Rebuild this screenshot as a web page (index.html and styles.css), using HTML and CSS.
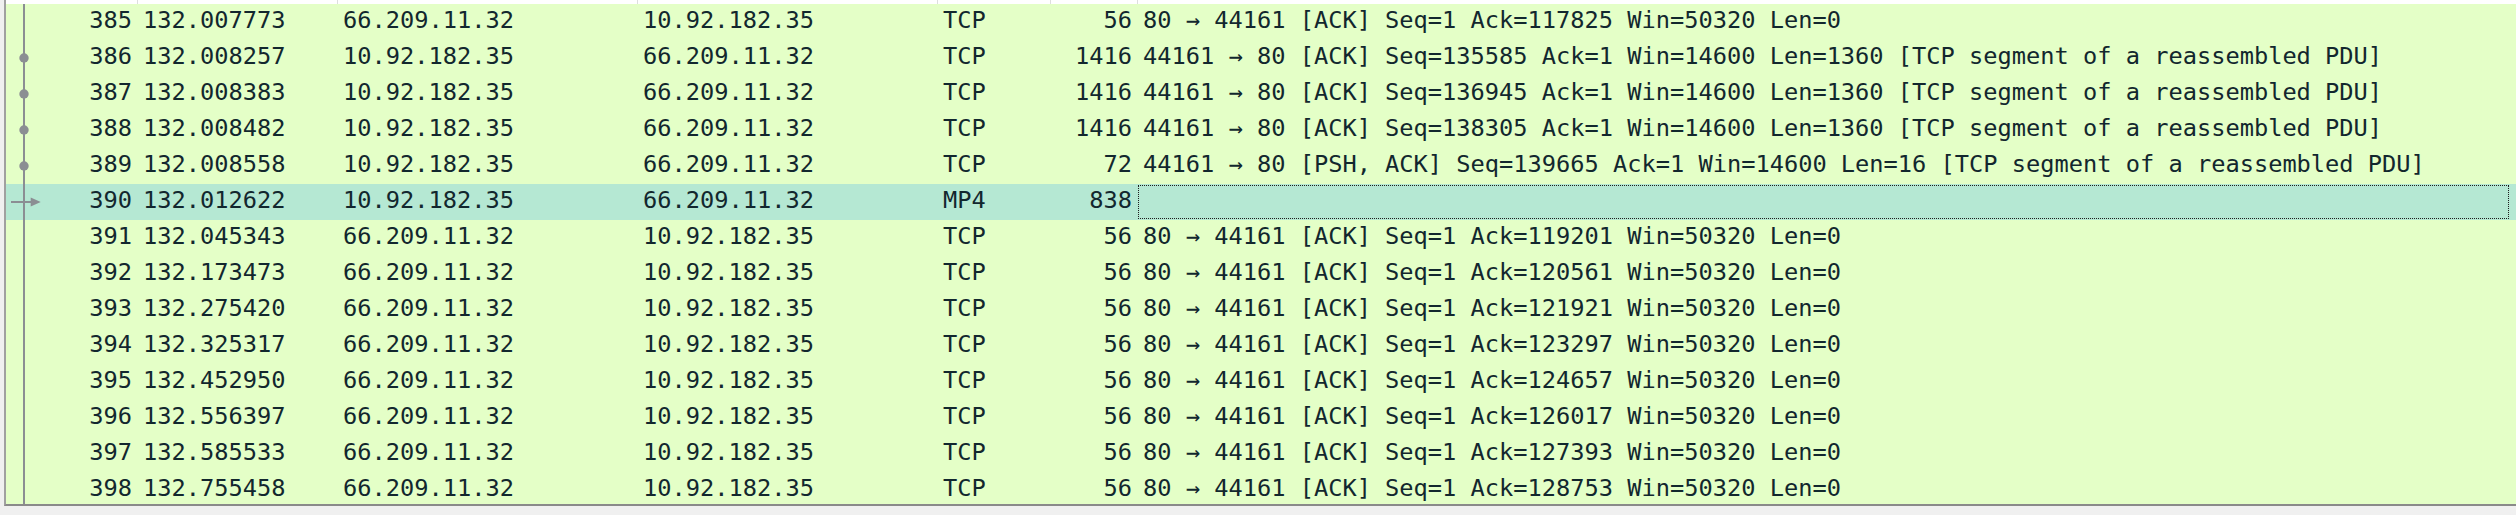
FILE: index.html
```html
<!DOCTYPE html>
<html>
<head>
<meta charset="utf-8">
<link rel="stylesheet" href="styles.css">
</head>
<body>
<div class="pane">
  <div class="head">
    <span></span><span></span><span></span><span></span><span></span><span></span><span class="last"></span>
  </div>
  <div class="row">
    <svg class="ind" width="36" height="36" viewBox="0 0 36 36"><rect x="17" y="0" width="2" height="36"/></svg>
    <span class="c r">385</span><span class="c">132.007773</span><span class="c">66.209.11.32</span><span class="c">10.92.182.35</span><span class="c">TCP</span><span class="c r">56</span><span class="c">80 → 44161 [ACK] Seq=1 Ack=117825 Win=50320 Len=0</span>
  </div>
  <div class="row">
    <svg class="ind" width="36" height="36" viewBox="0 0 36 36"><rect x="17" y="0" width="2" height="36"/><circle cx="18" cy="18" r="4.7"/></svg>
    <span class="c r">386</span><span class="c">132.008257</span><span class="c">10.92.182.35</span><span class="c">66.209.11.32</span><span class="c">TCP</span><span class="c r">1416</span><span class="c">44161 → 80 [ACK] Seq=135585 Ack=1 Win=14600 Len=1360 [TCP segment of a reassembled PDU]</span>
  </div>
  <div class="row">
    <svg class="ind" width="36" height="36" viewBox="0 0 36 36"><rect x="17" y="0" width="2" height="36"/><circle cx="18" cy="18" r="4.7"/></svg>
    <span class="c r">387</span><span class="c">132.008383</span><span class="c">10.92.182.35</span><span class="c">66.209.11.32</span><span class="c">TCP</span><span class="c r">1416</span><span class="c">44161 → 80 [ACK] Seq=136945 Ack=1 Win=14600 Len=1360 [TCP segment of a reassembled PDU]</span>
  </div>
  <div class="row">
    <svg class="ind" width="36" height="36" viewBox="0 0 36 36"><rect x="17" y="0" width="2" height="36"/><circle cx="18" cy="18" r="4.7"/></svg>
    <span class="c r">388</span><span class="c">132.008482</span><span class="c">10.92.182.35</span><span class="c">66.209.11.32</span><span class="c">TCP</span><span class="c r">1416</span><span class="c">44161 → 80 [ACK] Seq=138305 Ack=1 Win=14600 Len=1360 [TCP segment of a reassembled PDU]</span>
  </div>
  <div class="row">
    <svg class="ind" width="36" height="36" viewBox="0 0 36 36"><rect x="17" y="0" width="2" height="36"/><circle cx="18" cy="18" r="4.7"/></svg>
    <span class="c r">389</span><span class="c">132.008558</span><span class="c">10.92.182.35</span><span class="c">66.209.11.32</span><span class="c">TCP</span><span class="c r">72</span><span class="c">44161 → 80 [PSH, ACK] Seq=139665 Ack=1 Win=14600 Len=16 [TCP segment of a reassembled PDU]</span>
  </div>
  <div class="row sel">
    <svg class="ind" width="36" height="36" viewBox="0 0 36 36"><rect x="17" y="0" width="2" height="36"/><rect x="5" y="17" width="22" height="2"/><polygon points="24.7,13.5 34.7,18 24.7,22.5"/></svg>
    <span class="c r">390</span><span class="c">132.012622</span><span class="c">10.92.182.35</span><span class="c">66.209.11.32</span><span class="c">MP4</span><span class="c r">838</span><span class="c info"></span>
  </div>
  <div class="row">
    <svg class="ind" width="36" height="36" viewBox="0 0 36 36"><rect x="17" y="0" width="2" height="36"/></svg>
    <span class="c r">391</span><span class="c">132.045343</span><span class="c">66.209.11.32</span><span class="c">10.92.182.35</span><span class="c">TCP</span><span class="c r">56</span><span class="c">80 → 44161 [ACK] Seq=1 Ack=119201 Win=50320 Len=0</span>
  </div>
  <div class="row">
    <svg class="ind" width="36" height="36" viewBox="0 0 36 36"><rect x="17" y="0" width="2" height="36"/></svg>
    <span class="c r">392</span><span class="c">132.173473</span><span class="c">66.209.11.32</span><span class="c">10.92.182.35</span><span class="c">TCP</span><span class="c r">56</span><span class="c">80 → 44161 [ACK] Seq=1 Ack=120561 Win=50320 Len=0</span>
  </div>
  <div class="row">
    <svg class="ind" width="36" height="36" viewBox="0 0 36 36"><rect x="17" y="0" width="2" height="36"/></svg>
    <span class="c r">393</span><span class="c">132.275420</span><span class="c">66.209.11.32</span><span class="c">10.92.182.35</span><span class="c">TCP</span><span class="c r">56</span><span class="c">80 → 44161 [ACK] Seq=1 Ack=121921 Win=50320 Len=0</span>
  </div>
  <div class="row">
    <svg class="ind" width="36" height="36" viewBox="0 0 36 36"><rect x="17" y="0" width="2" height="36"/></svg>
    <span class="c r">394</span><span class="c">132.325317</span><span class="c">66.209.11.32</span><span class="c">10.92.182.35</span><span class="c">TCP</span><span class="c r">56</span><span class="c">80 → 44161 [ACK] Seq=1 Ack=123297 Win=50320 Len=0</span>
  </div>
  <div class="row">
    <svg class="ind" width="36" height="36" viewBox="0 0 36 36"><rect x="17" y="0" width="2" height="36"/></svg>
    <span class="c r">395</span><span class="c">132.452950</span><span class="c">66.209.11.32</span><span class="c">10.92.182.35</span><span class="c">TCP</span><span class="c r">56</span><span class="c">80 → 44161 [ACK] Seq=1 Ack=124657 Win=50320 Len=0</span>
  </div>
  <div class="row">
    <svg class="ind" width="36" height="36" viewBox="0 0 36 36"><rect x="17" y="0" width="2" height="36"/></svg>
    <span class="c r">396</span><span class="c">132.556397</span><span class="c">66.209.11.32</span><span class="c">10.92.182.35</span><span class="c">TCP</span><span class="c r">56</span><span class="c">80 → 44161 [ACK] Seq=1 Ack=126017 Win=50320 Len=0</span>
  </div>
  <div class="row">
    <svg class="ind" width="36" height="36" viewBox="0 0 36 36"><rect x="17" y="0" width="2" height="36"/></svg>
    <span class="c r">397</span><span class="c">132.585533</span><span class="c">66.209.11.32</span><span class="c">10.92.182.35</span><span class="c">TCP</span><span class="c r">56</span><span class="c">80 → 44161 [ACK] Seq=1 Ack=127393 Win=50320 Len=0</span>
  </div>
  <div class="row">
    <svg class="ind" width="36" height="36" viewBox="0 0 36 36"><rect x="17" y="0" width="2" height="36"/></svg>
    <span class="c r">398</span><span class="c">132.755458</span><span class="c">66.209.11.32</span><span class="c">10.92.182.35</span><span class="c">TCP</span><span class="c r">56</span><span class="c">80 → 44161 [ACK] Seq=1 Ack=128753 Win=50320 Len=0</span>
  </div>
</div>
</body>
</html>
```

FILE: styles.css
```css
html, body {
  margin: 0;
  padding: 0;
}
body {
  background: #f0f0f0;
  height: 515px;
  overflow: hidden;
  font-family: "DejaVu Sans Mono", "Liberation Mono", monospace;
}
.pane {
  margin-left: 4px;
  height: 504px;
  border-left: 2px solid #a0a0a0;
  border-bottom: 2px solid #8a8a8a;
  background: #e4ffc7;
  overflow: hidden;
}
.head {
  display: grid;
  grid-template-columns: 132px 200px 300px 300px 113px 87px 1fr;
  height: 4px;
  background: #ffffff;
}
.head span {
  border-right: 1px solid #dedede;
}
.head span.last {
  border-right: none;
}
.row {
  display: grid;
  grid-template-columns: 36px 96px 200px 300px 300px 113px 87px 1fr;
  height: 36px;
  color: #12272e;
  font-size: 23.67px;
  line-height: 33px;
  white-space: pre;
}
.ind {
  display: block;
  fill: #8b8e93;
}
.c {
  padding: 0 5px 3px 5px;
  overflow: hidden;
}
.r {
  text-align: right;
  padding-right: 6px;
}
.sel {
  background: #b5e8d3;
}
.sel .info {
  box-sizing: border-box;
  margin: 1px 7px 1px 0;
  border: 1px dotted #1e1e1e;
}
```
